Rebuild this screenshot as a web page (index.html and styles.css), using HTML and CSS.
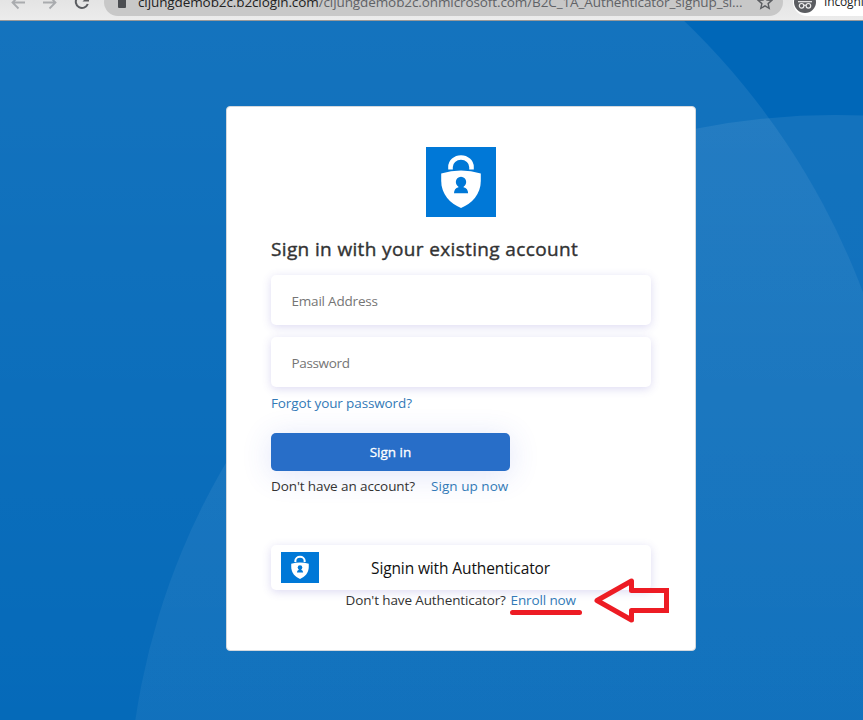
FILE: index.html
```
<!DOCTYPE html>
<html lang="en">
<head>
<meta charset="utf-8">
<title>Sign in</title>
<link rel="stylesheet" href="styles.css">
</head>
<body>
<svg class="defs" aria-hidden="true">
  <symbol id="auth" viewBox="0 0 70 70">
    <path d="M24.500 22.500v-2.500a10.500 9.500 0 0 1 21 0v2.500" fill="none" stroke="#fff" stroke-width="4.600"/>
    <path d="M15.200 26.500Q25 23.600 35 23.600T54.800 26.500V34C54.800 47 46 56.500 35 61C24 56.500 15.200 47 15.200 34Z" fill="#fff"/>
    <circle cx="35" cy="35" r="5.200" fill="#0078d7"/>
    <path d="M32.500 38h5v2.200q4.600 1.200 4.600 6.100H28q0-4.900 4.500-6.100Z" fill="#0078d7"/>
  </symbol>
</svg>
<header class="toolbar">
  <svg class="nav" viewBox="0 0 104 20">
    <g fill="none" stroke="#a9abae" stroke-width="1.800">
      <path d="M25 2.500H12.500M18.500-3.500l-6 6 6 6"/>
      <path d="M43 2.500h12.500M49.500-3.500l6 6-6 6"/>
    </g>
    <path d="M86.500-2.500a6.200 6.200 0 1 0 1.300 6.500" fill="none" stroke="#5b5d61" stroke-width="2"/>
    <path d="M89-5v6.500h-6.500Z" fill="#5b5d61"/>
  </svg>
  <div class="omnibox">
    <span class="lock"></span>
    <span class="url"><b>cljungdemob2c.b2clogin.com</b>/cljungdemob2c.onmicrosoft.com/B2C_1A_Authenticator_signup_si...</span>
    <svg class="star" viewBox="0 0 16 16"><path d="M8 1.500l1.900 4.500 4.900.4-3.700 3.200 1.100 4.800L8 11.900l-4.200 2.500 1.100-4.800L1.200 6.400 6.100 6Z" fill="none" stroke="#5b5d61" stroke-width="1.400"/></svg>
  </div>
  <div class="incognito">
    <svg viewBox="0 0 22 22"><circle cx="11" cy="11" r="11" fill="#5b5d61"/><g fill="none" stroke="#eee" stroke-width="1.200"><path d="M4 10.700h14"/><circle cx="7.600" cy="14.800" r="2.300"/><circle cx="14.400" cy="14.800" r="2.300"/><path d="M9.900 14.500q1.100-.8 2.200 0"/></g><path d="M7 8.500l1-4h6l1 4Z" fill="#eee"/></svg>
    <span>Incognito</span>
  </div>
</header>
<main class="page">
  <svg class="backdrop" viewBox="0 21 863 699">
    <defs>
      <linearGradient id="g1" gradientUnits="userSpaceOnUse" x1="0" y1="21" x2="0" y2="720"><stop stop-color="#fff" stop-opacity=".08"/><stop offset="1" stop-color="#fff" stop-opacity=".02"/></linearGradient>
      <linearGradient id="g2" gradientUnits="userSpaceOnUse" x1="0" y1="115" x2="0" y2="720"><stop stop-color="#fff" stop-opacity=".075"/><stop offset="1" stop-color="#fff" stop-opacity=".05"/></linearGradient>
    </defs>
    <circle cx="175" cy="551" r="735" fill="url(#g1)"/>
    <circle cx="835" cy="822" r="707" fill="url(#g2)"/>
  </svg>
  <section class="card">
    <svg class="logo"><use href="#auth"/></svg>
    <h1>Sign in with your existing account</h1>
    <div class="field"><span class="email">Email Address</span></div>
    <div class="field"><span class="password">Password</span></div>
    <a class="forgot">Forgot your password?</a>
    <button class="signin">Sign in</button>
    <p class="signup"><span>Don't have an account?</span><a>Sign up now</a></p>
    <div class="provider"><svg class="mini"><use href="#auth"/></svg><span>Signin with Authenticator</span></div>
    <p class="enroll"><span>Don't have Authenticator?</span><a>Enroll now</a></p>
    <svg class="markup" viewBox="510 575 162 50">
      <g fill="none" stroke="#ed1c24" stroke-width="5" stroke-linejoin="round" stroke-linecap="round">
        <path d="M512.500 612.500H579.500"/>
        <path d="M597 600.500L631.500 581V590.500H666.500V610.500H631.500V620Z"/>
        <path d="M650 590.500H666.500V610.500H650" stroke-linejoin="miter"/>
      </g>
    </svg>
  </section>
</main>
</body>
</html>
```
FILE: styles.css
```
* { box-sizing: border-box; }
body { margin: 0; width: 863px; height: 720px; overflow: hidden; font: 13.500px/20px "Open Sans", "Noto Sans", sans-serif; color: #333; display: flex; flex-direction: column; }
.defs { position: absolute; width: 0; height: 0; }
.toolbar { height: 21px; flex: none; display: flex; overflow: hidden; background: linear-gradient(#e4e4e4, #ececec); border-bottom: 1px solid #999; }
.nav { width: 104px; height: 20px; flex: none; }
.omnibox { width: 679px; height: 28px; margin-top: -12px; flex: none; border-radius: 14px; background: #c8c8c8; display: flex; align-items: center; padding-left: 14px; color: #606266; }
.lock { width: 8px; height: 9px; margin: 2px 12px 0 0; background: #4b4d51; border-radius: 1px; }
.url { width: 607px; white-space: nowrap; letter-spacing: -.1px; }
.url b { font-weight: 400; color: #222; }
.star { width: 16px; height: 16px; margin-left: 12px; }
.incognito { margin: -12px 0 0 10px; height: 28px; width: 120px; flex: none; background: #fff; border-radius: 14px; display: flex; align-items: center; font-size: 12px; letter-spacing: -.15px; color: #222; }
.incognito svg { width: 22px; height: 22px; margin: 0 8px 0 1px; }
.page { position: relative; flex: 1; display: flex; align-items: flex-start; background: #0067b8; }
.backdrop { position: absolute; inset: 0; width: 863px; height: 699px; }
.card { position: relative; margin: 85px 0 0 226px; width: 470px; height: 545px; padding: 40px 44px 0; display: flex; flex-direction: column; align-items: flex-start; background: #fff; border: 1px solid #d3d8dd; border-radius: 4px; }
.logo { width: 70px; height: 70px; align-self: center; background: #0078d7; }
h1 { margin: 20px 0 13px; font-size: 19px; line-height: 25px; font-weight: 400; letter-spacing: .36px; -webkit-text-stroke: .4px #333; white-space: nowrap; }
.field { width: 380px; height: 50px; margin-bottom: 12px; padding: 2px 20px 0 20.500px; display: flex; align-items: center; flex: none; border-radius: 5px; box-shadow: 0 2px 10px rgba(80, 70, 190, .2); color: #757575; }
.email { letter-spacing: -.2px; }
.password { letter-spacing: -.35px; }
.forgot { margin-top: -6px; letter-spacing: -.12px; }
a { color: #337ab7; white-space: nowrap; }
.signin { width: 239px; height: 38px; margin: 20px 0 0; padding: 0; border: 0; border-radius: 5px; background: #286ec8; color: #fff; font: 400 13.500px "Open Sans", sans-serif; -webkit-text-stroke: .3px #fff; box-shadow: 0 4px 30px rgba(60, 90, 220, .16); }
p { margin: 0; white-space: nowrap; }
.signup { display: flex; margin-top: 5px; height: 20px; letter-spacing: -.1px; }
.signup span { width: 160px; }
.signup a { letter-spacing: .05px; }
.provider { width: 380px; height: 45px; margin-top: 49px; padding-left: 10px; display: flex; align-items: center; border-radius: 5px; box-shadow: 0 2px 10px rgba(80, 70, 190, .2); color: #111; font-size: 15.500px; letter-spacing: -.12px; }
.mini { width: 38px; height: 31px; margin-right: 52px; background: #0078d7; }
.enroll { display: flex; margin-left: 74.500px; letter-spacing: -.12px; }
.enroll span { width: 165px; }
.markup { position: absolute; left: 283px; top: 468px; width: 162px; height: 50px; }
```
